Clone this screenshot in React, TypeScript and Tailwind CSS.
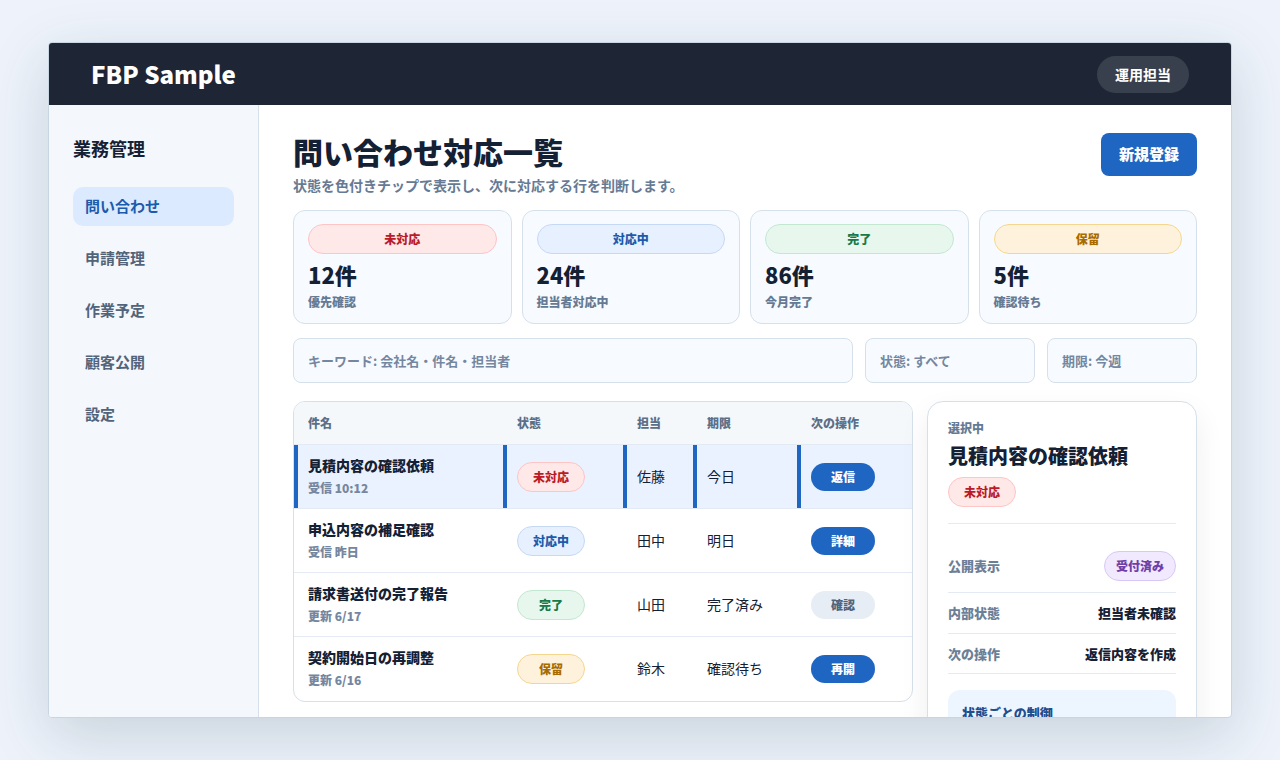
import type { ReactNode } from "react";

type Tone = "red" | "blue" | "green" | "amber" | "purple";

const toneClass: Record<Tone, string> = {
  red: "border-[#ffc4c4] bg-[#ffe8e8] text-[#b91c28]",
  blue: "border-[#c5d9f5] bg-[#e6f0ff] text-[#1c5bab]",
  green: "border-[#c3e8d0] bg-[#e7f7ed] text-[#18794a]",
  amber: "border-[#f5d68f] bg-[#fff2dc] text-[#a86b00]",
  purple: "border-[#d9c8f5] bg-[#f1e9fe] text-[#6f3fa8]",
};

function Chip({ tone, className = "", children }: { tone: Tone; className?: string; children: ReactNode }) {
  return (
    <span
      className={`flex h-[30px] items-center justify-center rounded-full border text-xs font-black ${toneClass[tone]} ${className}`}
    >
      {children}
    </span>
  );
}

const navItems = ["問い合わせ", "申請管理", "作業予定", "顧客公開", "設定"];

const stats: { tone: Tone; label: string; count: string; note: string }[] = [
  { tone: "red", label: "未対応", count: "12件", note: "優先確認" },
  { tone: "blue", label: "対応中", count: "24件", note: "担当者対応中" },
  { tone: "green", label: "完了", count: "86件", note: "今月完了" },
  { tone: "amber", label: "保留", count: "5件", note: "確認待ち" },
];

type Row = {
  title: string;
  meta: string;
  tone: Tone;
  status: string;
  owner: string;
  due: string;
  action: string;
  muted?: boolean;
  selected?: boolean;
};

const rows: Row[] = [
  { title: "見積内容の確認依頼", meta: "受信 10:12", tone: "red", status: "未対応", owner: "佐藤", due: "今日", action: "返信", selected: true },
  { title: "申込内容の補足確認", meta: "受信 昨日", tone: "blue", status: "対応中", owner: "田中", due: "明日", action: "詳細" },
  { title: "請求書送付の完了報告", meta: "更新 6/17", tone: "green", status: "完了", owner: "山田", due: "完了済み", action: "確認", muted: true },
  { title: "契約開始日の再調整", meta: "更新 6/16", tone: "amber", status: "保留", owner: "鈴木", due: "確認待ち", action: "再開" },
];

const fieldClass =
  "h-[45px] w-full min-w-0 appearance-none rounded-lg border border-[#d5e0eb] bg-[#f7fbff] px-3.5 text-[13px] font-bold text-[#7587a0] placeholder:text-[#7587a0] placeholder:opacity-100";

function InquiryTable() {
  return (
    <div className="overflow-hidden rounded-xl border border-[#d5e0eb] bg-white">
      <table className="w-full table-fixed border-separate border-spacing-0 text-left text-sm leading-[21px]">
        <colgroup>
          <col />
          <col className="w-[120px]" />
          <col className="w-[70px]" />
          <col className="w-[104px]" />
          <col className="w-[115px]" />
        </colgroup>
        <thead>
          <tr className="h-[43px] bg-[#f4f8fb] text-xs text-[#5b6f88]">
            {["件名", "状態", "担当", "期限", "次の操作"].map((heading) => (
              <th key={heading} scope="col" className="border-b border-[#e3eaf3] px-3.5 font-black">
                {heading}
              </th>
            ))}
          </tr>
        </thead>
        <tbody>
          {rows.map((row, index) => {
            const line = index < rows.length - 1 ? "border-[#e3eaf3]" : "border-transparent";
            const mark = row.selected ? "bg-[#eaf2ff] shadow-[inset_4px_0_0_#1f66c2]" : "";
            const cell = `border-b px-3.5 ${line} ${mark}`;
            return (
              <tr key={row.title} className="h-16">
                <td className={cell}>
                  <strong className="block font-black">{row.title}</strong>
                  <span className="mt-0.5 block text-xs leading-5 font-black text-[#7587a0]">{row.meta}</span>
                </td>
                <td className={cell}>
                  <Chip tone={row.tone} className="w-[68px]">
                    {row.status}
                  </Chip>
                </td>
                <td className={cell}>{row.owner}</td>
                <td className={cell}>{row.due}</td>
                <td className={cell}>
                  <button
                    type="button"
                    className={`block h-7 w-16 rounded-full text-xs font-black ${row.muted ? "bg-[#e7edf4] text-[#52647a]" : "bg-[#1f66c2] text-white"}`}
                  >
                    {row.action}
                  </button>
                </td>
              </tr>
            );
          })}
        </tbody>
      </table>
    </div>
  );
}

function DetailPanel() {
  return (
    <aside className="rounded-2xl border border-[#d5e0eb] bg-white px-5 py-4 shadow-[0_12px_30px_rgba(20,33,52,0.07)]">
      <p className="text-xs leading-5 font-black text-[#667a94]">選択中</p>
      <h2 className="mt-1 text-xl leading-7 font-black">見積内容の確認依頼</h2>
      <Chip tone="red" className="mt-[7px] w-[68px]">
        未対応
      </Chip>
      <dl className="mt-4 border-t border-[#e3eaf3] pt-4 text-[13px]">
        <div className="flex h-[53px] items-center justify-between border-b border-[#e3eaf3]">
          <dt className="font-black text-[#6b7f98]">公開表示</dt>
          <dd>
            <Chip tone="purple" className="w-[72px]">
              受付済み
            </Chip>
          </dd>
        </div>
        <div className="flex h-[41px] items-center justify-between border-b border-[#e3eaf3]">
          <dt className="font-black text-[#6b7f98]">内部状態</dt>
          <dd className="font-black">担当者未確認</dd>
        </div>
        <div className="flex h-10 items-center justify-between border-b border-[#e3eaf3]">
          <dt className="font-black text-[#6b7f98]">次の操作</dt>
          <dd className="font-black">返信内容を作成</dd>
        </div>
      </dl>
      <section className="mt-4 rounded-xl bg-[#edf5ff] p-3.5 text-[13px] text-[#1d4f8f]">
        <h3 className="leading-[18px] font-black">状態ごとの制御</h3>
      </section>
    </aside>
  );
}

export default function App() {
  return (
    <div className="h-screen bg-[#eef3fb] px-12 py-[42px] font-['Noto_Sans_CJK_JP',sans-serif] text-[#142033]">
      <div className="flex h-full flex-col overflow-hidden rounded border border-[#c8d5e2] bg-white shadow-[0_18px_60px_rgba(30,60,70,0.18)]">
        <header className="flex h-[62px] shrink-0 items-center justify-between bg-[#1e2635] px-[42px] text-white">
          <div className="text-2xl leading-[34px] font-black">FBP Sample</div>
          <button type="button" className="h-[37px] rounded-full bg-white/12 px-[18px] text-sm font-bold">
            運用担当
          </button>
        </header>
        <div className="flex min-h-0 flex-1">
          <nav aria-label="業務管理" className="w-[210px] shrink-0 border-r border-[#d5e0eb] bg-[#f4f7fc] px-6 py-[30px]">
            <p className="text-lg leading-[26px] font-bold">業務管理</p>
            <ul className="mt-[26px] flex flex-col gap-[13px]">
              {navItems.map((item, index) => (
                <li key={item}>
                  <a
                    href="#"
                    aria-current={index === 0 ? "page" : undefined}
                    className={`block rounded-[10px] px-3 pt-2 pb-2.5 text-[15px] leading-[21px] font-bold ${index === 0 ? "bg-[#dbeafe] text-[#1c5bab]" : "text-[#52647a]"}`}
                  >
                    {item}
                  </a>
                </li>
              ))}
            </ul>
          </nav>
          <main className="min-w-0 flex-1 overflow-hidden px-[34px] pt-7">
            <div className="flex items-start justify-between">
              <div>
                <h1 className="text-3xl leading-9 font-black">問い合わせ対応一覧</h1>
                <p className="mt-1.5 text-sm leading-[21px] font-bold text-[#667a94]">
                  状態を色付きチップで表示し、次に対応する行を判断します。
                </p>
              </div>
              <button type="button" className="h-[43px] rounded-lg bg-[#1f66c2] px-[18px] text-[15px] font-black text-white">
                新規登録
              </button>
            </div>
            <div className="mt-3.5 grid grid-cols-4 gap-2.5">
              {stats.map((stat) => (
                <section key={stat.label} className="rounded-xl border border-[#d5e0eb] bg-[#f7fbff] px-3.5 pt-[13px] pb-[11px]">
                  <Chip tone={stat.tone} className="w-full">
                    {stat.label}
                  </Chip>
                  <p className="mt-1 text-[22px] leading-8 font-black">{stat.count}</p>
                  <p className="mt-0.5 text-xs leading-5 font-black text-[#667a94]">{stat.note}</p>
                </section>
              ))}
            </div>
            <form className="mt-3.5 grid grid-cols-[minmax(0,1fr)_170px_150px] gap-3">
              <input type="text" aria-label="キーワード" placeholder="キーワード: 会社名・件名・担当者" className={fieldClass} />
              <select aria-label="状態" className={fieldClass}>
                <option>状態: すべて</option>
              </select>
              <select aria-label="期限" className={fieldClass}>
                <option>期限: 今週</option>
              </select>
            </form>
            <div className="mt-[18px] grid grid-cols-[minmax(0,1fr)_270px] items-start gap-3.5">
              <InquiryTable />
              <DetailPanel />
            </div>
          </main>
        </div>
      </div>
    </div>
  );
}
